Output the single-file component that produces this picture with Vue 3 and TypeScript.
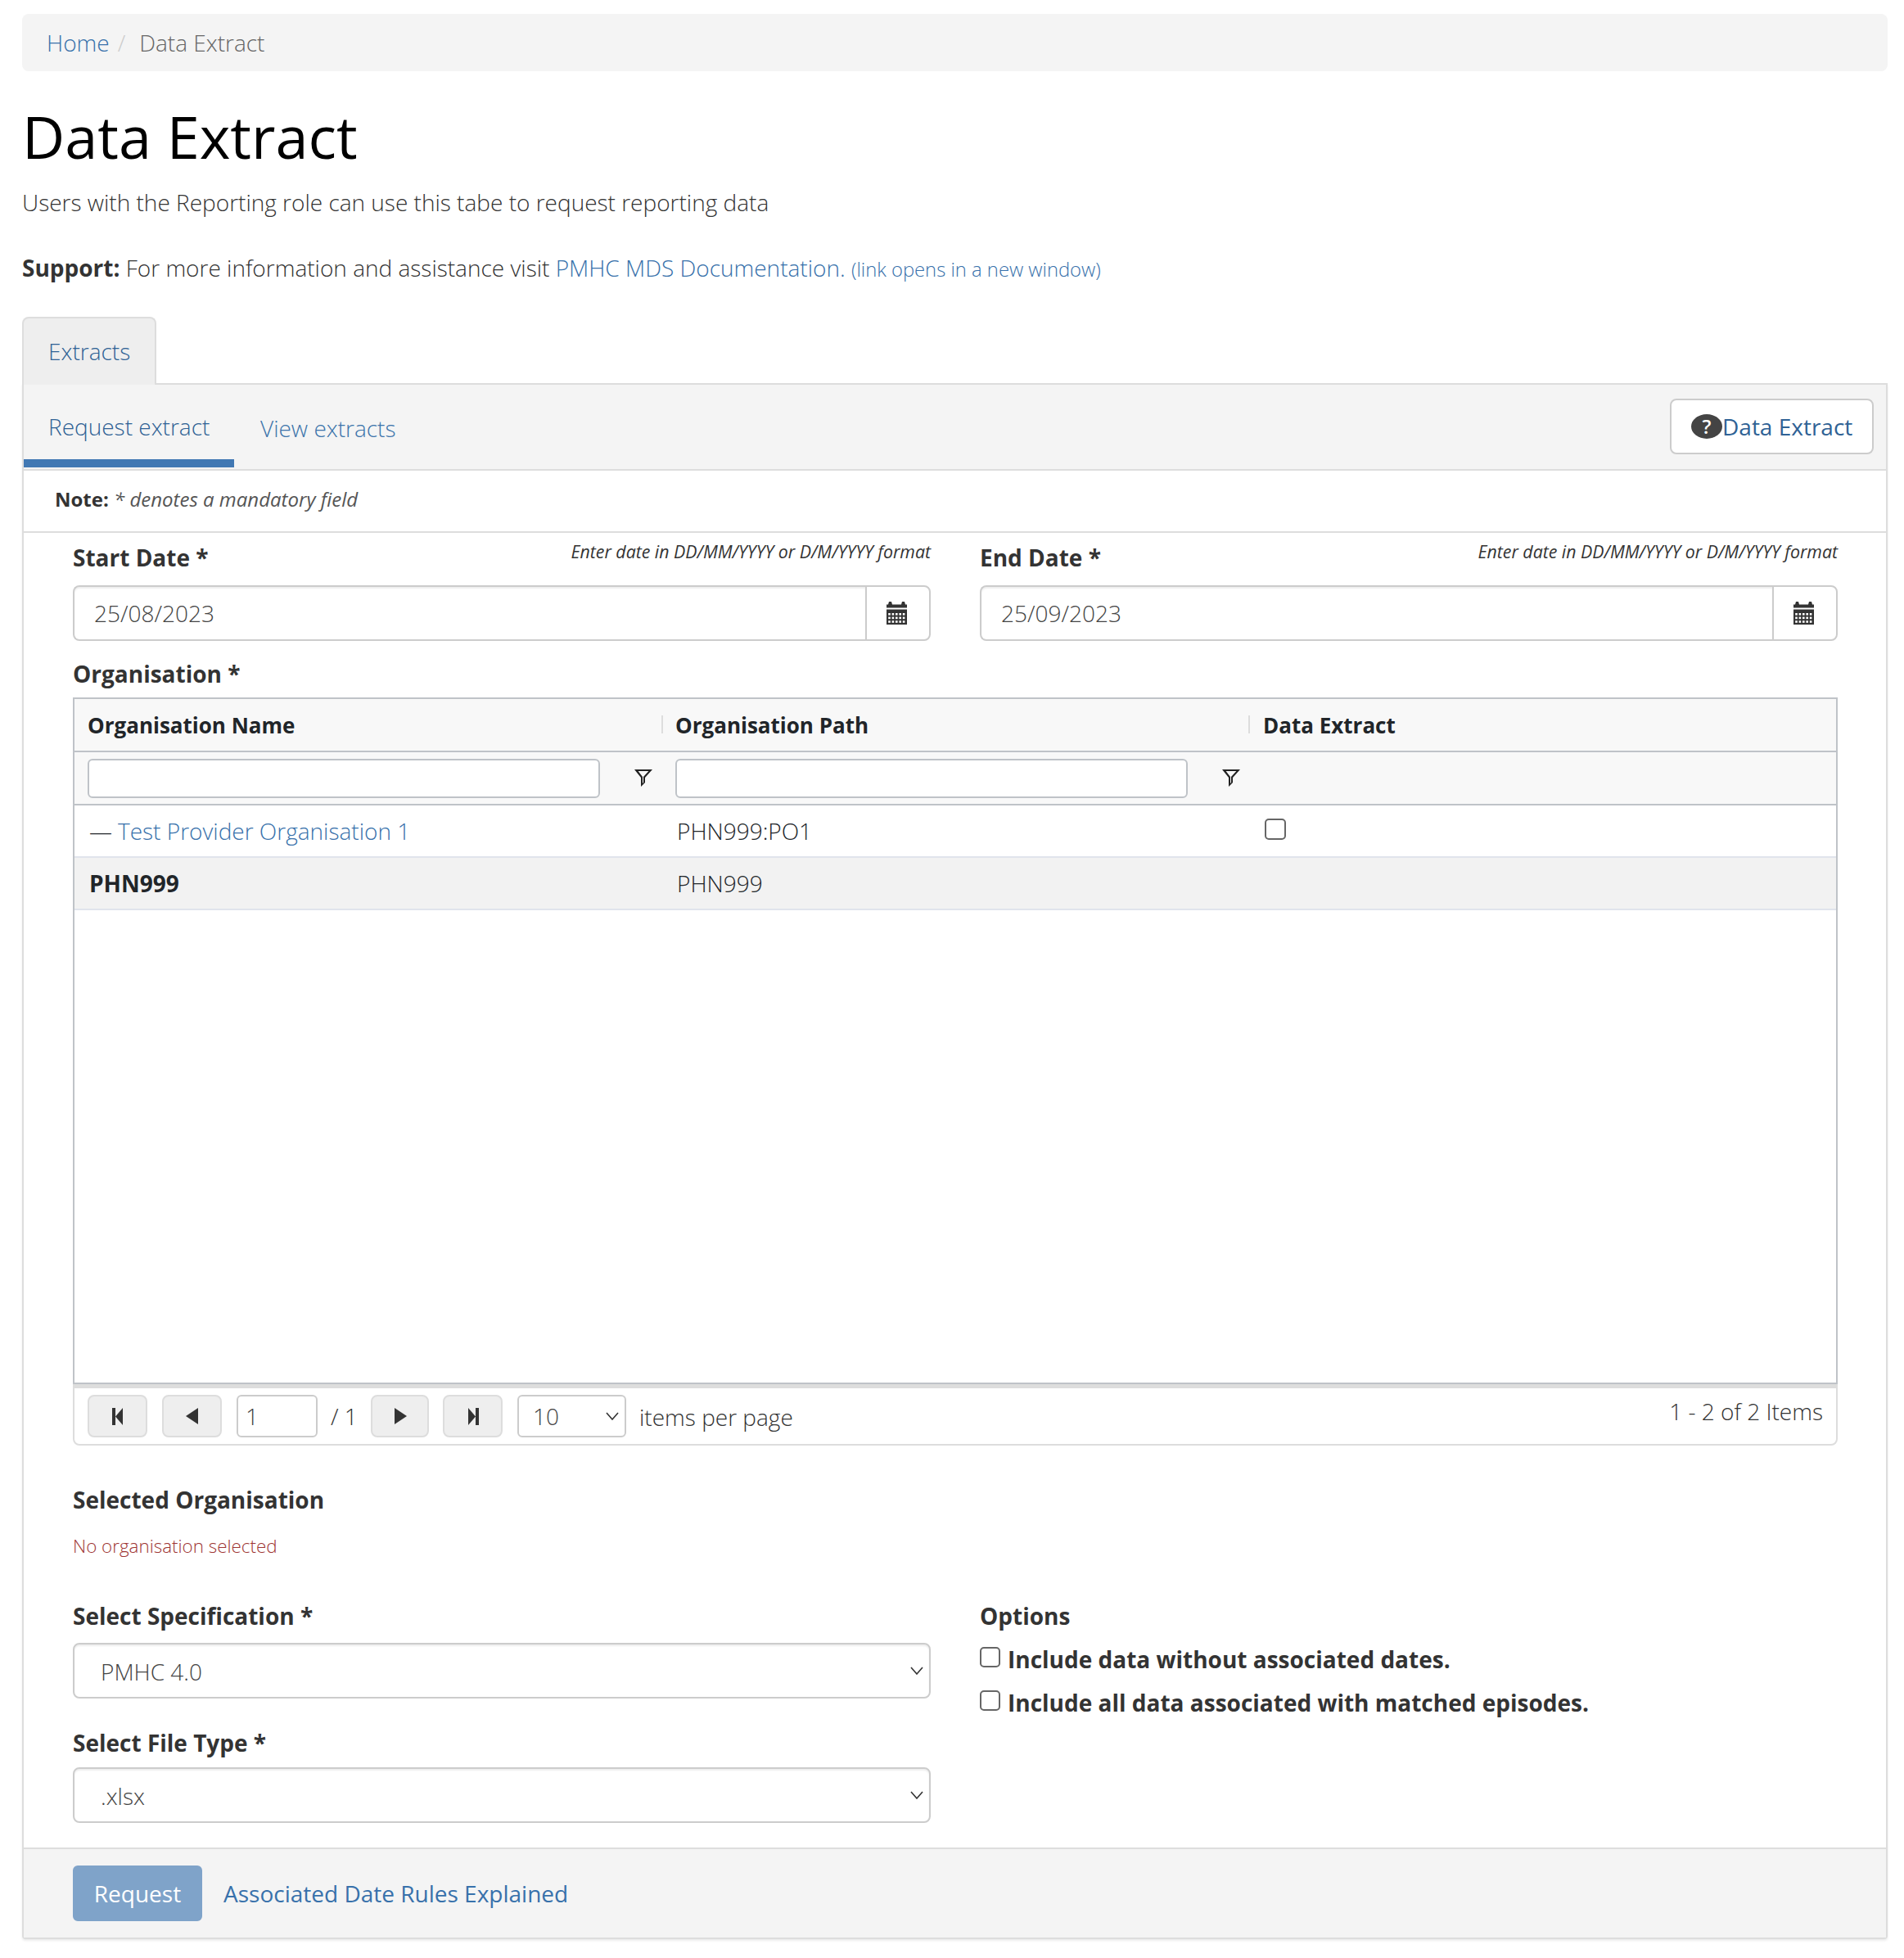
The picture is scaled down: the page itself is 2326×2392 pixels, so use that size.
<script setup lang="ts">
interface Org {
  name: string;
  path: string;
  child: boolean;
}

const orgs: Org[] = [
  { name: "Test Provider Organisation 1", path: "PHN999:PO1", child: true },
  { name: "PHN999", path: "PHN999", child: false },
];
const dates = [
  { label: "Start Date *", value: "25/08/2023" },
  { label: "End Date *", value: "25/09/2023" },
];
const calendarCols = [0, 1, 2, 3, 4];
const calendarRows = [14, 18.6, 23.2];
</script>

<template>
  <div class="page">
    <nav class="breadcrumb">
      <a class="link">Home</a>
      <span class="crumb-sep">/</span>
      <span class="crumb-current">Data Extract</span>
    </nav>

    <h1 class="title">Data Extract</h1>
    <p class="intro">Users with the Reporting role can use this tabe to request reporting data</p>
    <p class="support">
      <strong>Support:</strong> For more information and assistance visit
      <a class="link">PMHC MDS Documentation.</a>{{ " " }}<a class="link small-link">(link opens in a new window)</a>
    </p>

    <div class="tab-strip">
      <div class="top-tab">Extracts</div>
    </div>

    <section class="panel">
      <header class="sub-header">
        <a class="sub-tab active">Request extract</a>
        <a class="sub-tab">View extracts</a>
        <button class="help-btn" type="button">
          <span class="help-icon">?</span>
          <span>Data Extract</span>
        </button>
      </header>

      <div class="note"><strong>Note:</strong> <em>* denotes a mandatory field</em></div>

      <div class="form">
        <div class="two-col">
          <div v-for="d in dates" :key="d.label">
            <div class="date-head">
              <label class="label">{{ d.label }}</label>
              <em class="hint">Enter date in DD/MM/YYYY or D/M/YYYY format</em>
            </div>
            <div class="date-input">
              <input class="date-field" type="text" :value="d.value" />
              <span class="date-addon">
                <svg width="25" height="28" viewBox="0 0 25 28">
                  <path fill="#333" d="M2 3.5 3 0h3l1 3.5h11L19 0h3l1 3.5h2v4H0v-4z" />
                  <path fill="#333" d="M0 9.5h25V28H0z" />
                  <g fill="#fff">
                    <template v-for="c in calendarCols" :key="c">
                      <rect v-for="r in calendarRows" :key="r" :x="2.2 + c * 4.4" :y="r" width="2.6" height="2.6" />
                    </template>
                  </g>
                </svg>
              </span>
            </div>
          </div>
        </div>

        <div class="label org-label">Organisation *</div>
        <div class="grid">
          <div class="grid-row grid-head">
            <div class="head-cell">Organisation Name</div>
            <div class="head-cell">Organisation Path</div>
            <div class="head-cell">Data Extract</div>
          </div>
          <div class="grid-row filter-row">
            <div class="filter-cell" v-for="n in 2" :key="n">
              <input class="filter-input" type="text" />
              <svg class="funnel" width="22" height="21" viewBox="0 0 22 21">
                <path fill="#222" fill-rule="evenodd" d="M0 0h22l-9 10v6l-5 5V10zM4.6 2l5.4 7v8l1-1V9l6.4-7z" />
              </svg>
            </div>
            <div></div>
          </div>
          <div class="rows">
            <div v-for="o in orgs" :key="o.path" class="grid-row data-row" :class="{ parent: !o.child }">
              <div class="cell">
                <template v-if="o.child">
                  <span class="dash">—</span> <a class="link">{{ o.name }}</a>
                </template>
                <strong v-else>{{ o.name }}</strong>
              </div>
              <div class="cell">{{ o.path }}</div>
              <div class="cell">
                <input v-if="o.child" class="check row-check" type="checkbox" />
              </div>
            </div>
          </div>
        </div>

        <div class="pager">
          <button class="page-btn wide" type="button" aria-label="First">
            <svg width="16" height="21" viewBox="0 0 16 21"><path fill="#333" d="M1 0h4v21H1zM5 10.5 14 0v21z" /></svg>
          </button>
          <button class="page-btn wider" type="button" aria-label="Previous">
            <svg width="16" height="20" viewBox="0 0 16 20"><path fill="#333" d="M15 0v20L0 10z" /></svg>
          </button>
          <input class="page-input" type="text" value="1" />
          <span class="page-total">/ 1</span>
          <button class="page-btn next" type="button" aria-label="Next">
            <svg width="16" height="20" viewBox="0 0 16 20"><path fill="#333" d="M1 0v20l15-10z" /></svg>
          </button>
          <button class="page-btn wider" type="button" aria-label="Last">
            <svg width="16" height="21" viewBox="0 0 16 21"><path fill="#333" d="M11 0h4v21h-4zM11 10.5 2 0v21z" /></svg>
          </button>
          <div class="select-wrap page-size">
            <select class="page-select"><option>10</option></select>
            <svg class="chevron" width="16" height="10" viewBox="0 0 16 10"><path fill="none" stroke="#333" stroke-width="1.6" d="M1 1l7 8 7-8" /></svg>
          </div>
          <span class="per-page">items per page</span>
          <span class="page-info">1 - 2 of 2 Items</span>
        </div>

        <div class="label selected-label">Selected Organisation</div>
        <div class="no-org">No organisation selected</div>

        <div class="two-col lower">
          <div>
            <div class="label select-label spec-label">Select Specification *</div>
            <div class="select-wrap">
              <select class="big-select"><option>PMHC 4.0</option></select>
              <svg class="chevron" width="16" height="10" viewBox="0 0 16 10"><path fill="none" stroke="#333" stroke-width="1.6" d="M1 1l7 8 7-8" /></svg>
            </div>
            <div class="label select-label second">Select File Type *</div>
            <div class="select-wrap">
              <select class="big-select"><option>.xlsx</option></select>
              <svg class="chevron" width="16" height="10" viewBox="0 0 16 10"><path fill="none" stroke="#333" stroke-width="1.6" d="M1 1l7 8 7-8" /></svg>
            </div>
          </div>
          <div>
            <div class="label select-label">Options</div>
            <label class="option first"><input class="check" type="checkbox" /> Include data without associated dates.</label>
            <label class="option"><input class="check" type="checkbox" /> Include all data associated with matched episodes.</label>
          </div>
        </div>
      </div>

      <footer class="panel-footer">
        <button class="request-btn" type="button">Request</button>
        <a class="link strong-link">Associated Date Rules Explained</a>
      </footer>
    </section>
  </div>
</template>

<style>
html,
body {
  margin: 0;
  background: #fff;
}
</style>

<style scoped>
.page {
  box-sizing: border-box;
  width: 2326px;
  height: 2392px;
  padding: 17px 20px 0 27px;
  font-family: "Open Sans", "Liberation Sans", sans-serif;
  font-size: 28px;
  font-weight: 300;
  line-height: 40px;
  color: #333;
}

.link {
  color: #3871ab;
  text-decoration: none;
}

.strong-link {
  font-weight: 400;
}

.breadcrumb {
  display: flex;
  align-items: center;
  height: 70px;
  padding: 0 30px;
  background: #f4f4f4;
  border-radius: 8px;
}

.crumb-sep {
  margin: 0 17px 0 10px;
  color: #ccc;
}

.crumb-current {
  color: #666;
}

.title {
  margin: 39px 0 0;
  font-size: 72px;
  font-weight: 400;
  line-height: 80px;
  color: #000;
}

.intro {
  margin: 21px 0 0;
}

.support {
  margin: 40px 0 0;
}

.support strong {
  font-weight: 700;
}

.small-link {
  font-size: 23.8px;
}

.tab-strip {
  display: flex;
  margin-top: 38px;
}

.top-tab {
  box-sizing: border-box;
  position: relative;
  z-index: 1;
  width: 164px;
  height: 83px;
  margin-bottom: -2px;
  padding: 20px 0 0 30px;
  background: #eee;
  border: 2px solid #ddd;
  border-bottom: 0;
  border-radius: 8px 8px 0 0;
  color: #2f6295;
}

.panel {
  border: 2px solid #ddd;
  border-radius: 0 0 4px 4px;
  box-shadow: 0 2px 3px rgba(0, 0, 0, 0.08);
}

.sub-header {
  display: flex;
  align-items: flex-start;
  height: 103px;
  background: #f4f4f4;
  border-bottom: 2px solid #ddd;
}

.sub-tab {
  box-sizing: border-box;
  height: 93px;
  padding: 33px 30px 0 32px;
  color: #3d74ab;
  white-space: nowrap;
}

.sub-tab.active {
  width: 257px;
  height: 101px;
  padding: 31px 0 0 30px;
  border-bottom: 10px solid #4178b3;
  color: #2f6295;
}

.help-btn {
  box-sizing: border-box;
  display: flex;
  align-items: center;
  width: 249px;
  height: 68px;
  margin: 17px 15px 0 auto;
  padding: 0 0 0 24px;
  background: #fff;
  border: 2px solid #ccc;
  border-radius: 8px;
  font: inherit;
  font-weight: 400;
  color: #2f6295;
}

.help-icon {
  display: flex;
  align-items: center;
  justify-content: center;
  width: 38px;
  height: 30px;
  background: #444;
  border-radius: 50%;
  color: #fff;
  font-size: 24px;
  font-weight: 600;
}

.note {
  box-sizing: border-box;
  height: 76px;
  padding: 15px 0 0 38px;
  border-bottom: 2px solid #ddd;
  font-size: 24px;
  font-weight: 400;
}

.note em {
  color: #555;
}

.note strong {
  font-weight: 700;
}

.form {
  padding: 0 59px 0 60px;
}

.two-col {
  display: grid;
  grid-template-columns: 1048px 1048px;
  column-gap: 60px;
}

.date-head {
  display: flex;
  justify-content: space-between;
  height: 64px;
}

.label {
  font-weight: 700;
}

.date-head .label {
  padding-top: 10px;
}

.hint {
  padding-top: 3px;
  font-size: 21.3px;
  font-weight: 400;
}

.date-input {
  display: flex;
  height: 68px;
}

.date-field {
  box-sizing: border-box;
  flex: 1;
  min-width: 0;
  padding: 0 24px;
  border: 2px solid #ccc;
  border-right: 0;
  border-radius: 8px 0 0 8px;
  box-shadow: inset 0 2px 2px rgba(0, 0, 0, 0.07);
  font: inherit;
  color: #444;
}

.date-addon {
  box-sizing: border-box;
  display: flex;
  align-items: center;
  justify-content: center;
  width: 80px;
  padding-right: 3px;
  border: 2px solid #ccc;
  border-radius: 0 8px 8px 0;
}

.org-label {
  padding-top: 20px;
  margin-bottom: 9px;
}

.grid {
  box-sizing: border-box;
  width: 2156px;
  height: 839px;
  border: 2px solid #bfc3c8;
}

.grid-row {
  display: grid;
  grid-template-columns: 717px 717px 1fr;
}

.grid-head {
  height: 63px;
  background: #f8f8f8;
  border-bottom: 2px solid #bfc3c8;
}

.head-cell {
  box-sizing: border-box;
  padding: 12px 0 0 17px;
  font-size: 26px;
  font-weight: 700;
  color: #212529;
  background: linear-gradient(#ddd, #ddd) left 20px / 2px 22px no-repeat;
}

.head-cell:first-child {
  padding-left: 16px;
  background: none;
}

.head-cell:last-child {
  padding-left: 18px;
}

.filter-row {
  height: 63px;
  background: #f8f8f8;
  border-bottom: 2px solid #bfc3c8;
}

.filter-cell {
  display: flex;
  align-items: center;
  height: 63px;
  padding-left: 17px;
}

.filter-cell:first-child {
  padding-left: 16px;
}

.filter-input {
  box-sizing: border-box;
  width: 626px;
  height: 48px;
  background: #fff;
  border: 2px solid #bfc3c8;
  border-radius: 6px;
}

.funnel {
  margin-left: 42px;
}

.data-row {
  box-sizing: border-box;
  height: 64px;
  border-bottom: 2px solid #e0e4ec;
}

.data-row.parent {
  background: #f2f2f2;
}

.cell {
  display: flex;
  align-items: center;
  gap: 7px;
  padding-left: 19px;
  color: #212529;
  white-space: pre;
}

.cell:first-child {
  padding-left: 18px;
}

.cell:last-child {
  padding-left: 20px;
}

.cell strong {
  font-weight: 700;
}

.dash {
  color: #212529;
}

.check {
  appearance: none;
  box-sizing: border-box;
  flex: none;
  width: 25px;
  height: 25px;
  margin: 0;
  background: #fff;
  border: 2px solid #666;
  border-radius: 5px;
}

.row-check {
  width: 26px;
  height: 26px;
  margin-top: -5px;
}

.pager {
  box-sizing: border-box;
  display: flex;
  align-items: flex-start;
  width: 2156px;
  height: 75px;
  padding: 8px 16px 0 16px;
  border: 2px solid #ddd;
  border-top: 5px solid #ddd;
  border-radius: 0 0 8px 8px;
}

.page-btn {
  box-sizing: border-box;
  display: flex;
  align-items: center;
  justify-content: center;
  height: 52px;
  padding: 0;
  background: #eee;
  border: 2px solid #ddd;
  border-radius: 8px;
}

.page-btn.wide {
  width: 73px;
  margin-right: 18px;
}

.page-btn.wider {
  width: 73px;
  margin-right: 18px;
}

.page-btn.next {
  width: 71px;
  margin-right: 17px;
}

.page-input {
  box-sizing: border-box;
  width: 99px;
  height: 52px;
  padding: 0 9px;
  border: 2px solid #ccc;
  border-radius: 6px;
  font: inherit;
  color: #444;
}

.page-total {
  width: 65px;
  padding: 6px 0 0 16px;
  box-sizing: border-box;
}

.select-wrap {
  position: relative;
}

.chevron {
  position: absolute;
  top: 50%;
  right: 9px;
  margin-top: -5px;
  pointer-events: none;
}

.page-size {
  width: 133px;
}

.page-select {
  appearance: none;
  box-sizing: border-box;
  width: 133px;
  height: 52px;
  padding: 0 17px;
  background: #fff;
  border: 2px solid #ccc;
  border-radius: 6px;
  font: inherit;
  color: #444;
}

.per-page {
  margin-left: 16px;
  padding-top: 7px;
}

.page-info {
  margin-left: auto;
  padding-top: 0;
}

.selected-label {
  margin-top: 46px;
}

.no-org {
  margin-top: 17px;
  font-size: 22.4px;
  color: #9e3533;
}

.lower {
  margin-top: 49px;
}

.select-label {
  height: 32px;
  line-height: 32px;
}

.spec-label {
  margin-bottom: 17px;
}

.select-label.second {
  height: 84px;
  padding-top: 32px;
  box-sizing: border-box;
  line-height: 44px;
}

.big-select {
  appearance: none;
  box-sizing: border-box;
  display: block;
  width: 100%;
  height: 68px;
  padding: 2px 32px 0;
  background: #fff;
  border: 2px solid #ccc;
  border-radius: 8px;
  box-shadow: inset 0 2px 2px rgba(0, 0, 0, 0.07);
  font: inherit;
  color: #444;
}

.option {
  display: flex;
  align-items: center;
  gap: 9px;
  height: 53px;
  font-weight: 700;
}

.option.first {
  margin-top: 10px;
}

.option .check {
  margin-top: -4px;
}

.panel-footer {
  display: flex;
  align-items: center;
  gap: 26px;
  height: 108px;
  margin-top: 30px;
  padding-left: 60px;
  background: #f4f4f4;
  border-top: 2px solid #ddd;
}

.request-btn {
  box-sizing: border-box;
  width: 158px;
  height: 68px;
  background: #7fa3c9;
  border: 2px solid #7fa3c9;
  border-radius: 6px;
  font: inherit;
  font-weight: 400;
  color: #fff;
}
</style>
